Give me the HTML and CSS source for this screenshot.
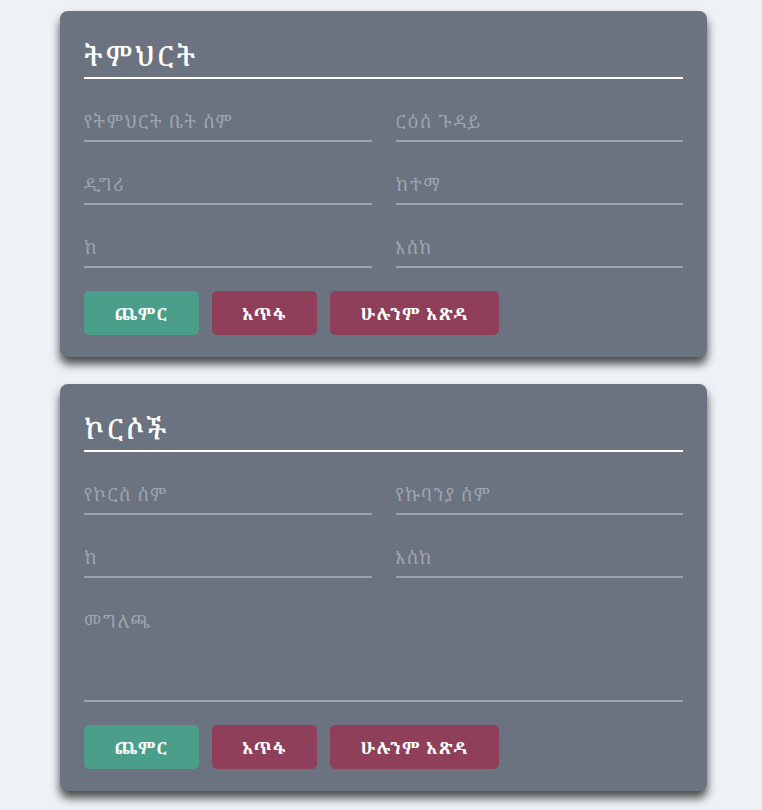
FILE: index.html
```html
<!DOCTYPE html>
<html lang="am">
<head>
<meta charset="utf-8">
<link rel="stylesheet" href="styles.css">
</head>
<body>
<div class="page">
  <div class="card card-prev"></div>

  <section class="card">
    <h2 class="card-title">ትምህርት</h2>
    <div class="fields">
      <input class="field" type="text" placeholder="የትምህርት ቤት ስም">
      <input class="field" type="text" placeholder="ርዕሰ ጉዳይ">
      <input class="field" type="text" placeholder="ዲግሪ">
      <input class="field" type="text" placeholder="ከተማ">
      <input class="field" type="text" placeholder="ከ">
      <input class="field" type="text" placeholder="እስከ">
    </div>
    <div class="actions">
      <button class="btn btn-add">ጨምር</button>
      <button class="btn btn-del">አጥፋ</button>
      <button class="btn btn-del">ሁሉንም አጽዳ</button>
    </div>
  </section>

  <section class="card">
    <h2 class="card-title">ኮርሶች</h2>
    <div class="fields">
      <input class="field" type="text" placeholder="የኮርስ ስም">
      <input class="field" type="text" placeholder="የኩባንያ ስም">
      <input class="field" type="text" placeholder="ከ">
      <input class="field" type="text" placeholder="እስከ">
      <textarea class="field field-area" placeholder="መግለጫ"></textarea>
    </div>
    <div class="actions">
      <button class="btn btn-add">ጨምር</button>
      <button class="btn btn-del">አጥፋ</button>
      <button class="btn btn-del">ሁሉንም አጽዳ</button>
    </div>
  </section>
</div>
</body>
</html>
```

FILE: styles.css
```css
html, body {
  margin: 0;
  padding: 0;
}
body {
  background: #eef2f6;
  font-family: "Noto Serif Ethiopic", "Abyssinica SIL", "Noto Sans Ethiopic", "Noto Sans", serif;
  height: 810px;
  overflow: hidden;
}
.page {
  width: 647px;
  margin: -40px 0 0 60px;
  display: flex;
  flex-direction: column;
  gap: 27px;
}
.card {
  background: #6b7280;
  border-radius: 8px;
  box-shadow: 0 7px 10px rgba(0, 0, 0, 0.7);
  padding: 24px 24px 22px;
  box-sizing: border-box;
}
.card-prev {
  height: 24px;
  padding: 0;
}
.card-title {
  margin: 0;
  color: #ffffff;
  font-size: 28px;
  font-weight: 500;
  letter-spacing: 2.5px;
  line-height: 40px;
  padding-bottom: 2px;
  border-bottom: 2px solid #ffffff;
}
.fields {
  display: grid;
  grid-template-columns: 1fr 1fr;
  column-gap: 24px;
  row-gap: 23px;
  margin-top: 23px;
}
.field {
  display: block;
  width: 100%;
  box-sizing: border-box;
  background: transparent;
  border: 0;
  border-bottom: 2px solid #9ca3af;
  color: #ffffff;
  font-family: inherit;
  font-size: 18px;
  letter-spacing: 1.2px;
  line-height: 24px;
  padding: 8px 0 8px;
  height: 40px;
  outline: none;
}
.field::placeholder {
  color: #9ca3af;
}
.field-area {
  grid-column: 1 / span 2;
  height: 101px;
  resize: none;
}
.actions {
  display: flex;
  gap: 13px;
  margin-top: 23px;
}
.btn {
  border: 0;
  border-radius: 5px;
  color: #ffffff;
  font-family: inherit;
  font-size: 17px;
  font-weight: 700;
  letter-spacing: 1.2px;
  height: 44px;
  padding: 0 30.5px;
}
.btn-add {
  background: #4b9e89;
}
.btn-del {
  background: #8f3f5a;
}
```
